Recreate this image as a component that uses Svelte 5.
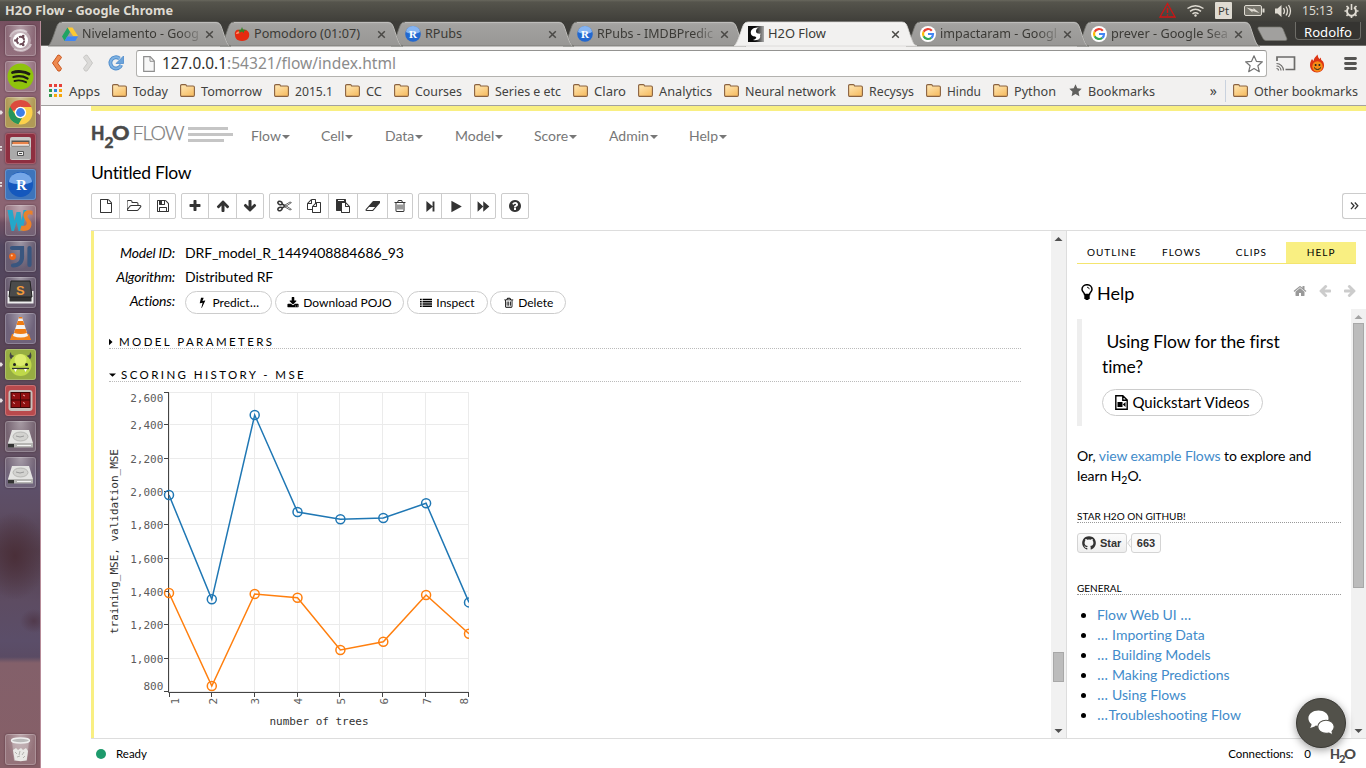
<script>
  const tabs = [
    { icon: 'drive', text: 'Nivelamento - Goog', w: 117, fade: true },
    { icon: 'tomato', text: 'Pomodoro (01:07)', w: 106 },
    { icon: 'rstudio', text: 'RPubs', w: 37 },
    { icon: 'rstudio', text: 'RPubs - IMDBPredic', w: 116, fade: true },
    { icon: 'h2o', text: 'H2O Flow', w: 58, active: true },
    { icon: 'google', text: 'impactaram - Googl', w: 117, fade: true },
    { icon: 'google', text: 'prever - Google Sea', w: 117, fade: true }
  ];
  const bookmarks = [
    ['Today', 35], ['Tomorrow', 61], ['2015.1', 38], ['CC', 16], ['Courses', 47],
    ['Series e etc', 66], ['Claro', 32], ['Analytics', 53], ['Neural network', 91],
    ['Recysys', 45], ['Hindu', 34], ['Python', 42]
  ];
  const menus = [['Flow', 70], ['Cell', 64], ['Data', 70], ['Model', 79], ['Score', 75], ['Admin', 80], ['Help', 70]];
  const groups = [
    [['file', 27], ['open', 30], ['save', 26]],
    [['plus', 26], ['up', 28], ['down', 27]],
    [['cut', 29], ['copy', 29], ['paste', 29], ['eraser', 30], ['trash', 25]],
    [['step', 22], ['play', 29], ['ff', 25]],
    [['question', 26]]
  ];
  const arrow = 'M1675 971q0 51-37 90l-75 75q-38 38-91 38-54 0-90-38l-294-293v704q0 52-37.5 84.5t-90.5 32.5h-128q-53 0-90.5-32.5t-37.5-84.5v-704l-294 293q-36 38-90 38t-90-38l-75-75q-38-38-38-90 0-53 38-91l651-651q35-37 90-37 54 0 91 37l651 651q37 39 37 91z';
  const paths = {
    file: 'M1596 380q28 28 48 76t20 88v1152q0 40-28 68t-68 28h-1344q-40 0-68-28t-28-68v-1600q0-40 28-68t68-28h896q40 0 88 20t76 48zm-444-244v376h376q-10-29-22-41l-313-313q-12-12-41-22zm384 1528v-1024h-416q-40 0-68-28t-28-68v-416h-768v1536h1280z',
    open: 'M1717 931q0-35-53-35h-1088q-40 0-85.500 21.500t-71.500 52.500l-294 363q-18 24-18 40 0 35 53 35h1088q40 0 86-22t71-53l294-363q18-22 18-39zm-1141-163h768v-160q0-40-28-68t-68-28h-576q-40 0-68-28t-28-68v-64q0-40-28-68t-68-28h-320q-40 0-68 28t-28 68v853l256-315q44-53 116-87.500t140-34.500zm1269 163q0 62-46 120l-295 363q-43 53-116 87.500t-140 34.500h-1088q-92 0-158-66t-66-158v-960q0-92 66-158t158-66h320q92 0 158 66t66 158v32h544q92 0 158 66t66 158v160h192q54 0 99 24.500t67 70.500q15 32 15 68z',
    save: 'M512 1536h768v-384h-768v384zm896 0h128v-896q0-14-10-38.500t-20-34.500l-281-281q-10-10-34-20t-39-10v416q0 40-28 68t-68 28h-576q-40 0-68-28t-28-68v-416h-128v1280h128v-416q0-40 28-68t68-28h832q40 0 68 28t28 68v416zm-384-928v-320q0-13-9.500-22.500t-22.500-9.500h-192q-13 0-22.500 9.500t-9.500 22.500v320q0 13 9.500 22.500t22.500 9.500h192q13 0 22.500-9.500t9.500-22.500zm640 32v928q0 40-28 68t-68 28h-1344q-40 0-68-28t-28-68v-1344q0-40 28-68t68-28h928q40 0 88 20t76 48l280 280q28 28 48 76t20 88z',
    plus: 'M1600 736v192q0 40-28 68t-68 28h-416v416q0 40-28 68t-68 28h-192q-40 0-68-28t-28-68v-416h-416q-40 0-68-28t-28-68v-192q0-40 28-68t68-28h416v-416q0-40 28-68t68-28h192q40 0 68 28t28 68v416h416q40 0 68 28t28 68z',
    up: arrow,
    copy: 'M1696 384q40 0 68 28t28 68v1216q0 40-28 68t-68 28h-960q-40 0-68-28t-28-68v-288h-544q-40 0-68-28t-28-68v-672q0-40 20-88t48-76l408-408q28-28 76-48t88-20h416q40 0 68 28t28 68v328q68-40 128-40h416zm-544 213l-299 299h299v-299zm-640-384l-299 299h299v-299zm196 647l316-316v-416h-384v416q0 40-28 68t-68 28h-416v640h512v-256q0-40 20-88t48-76zm956 804v-1152h-384v416q0 40-28 68t-68 28h-416v640h896z',
    paste: 'M768 1664h896v-640h-416q-40 0-68-28t-28-68v-416h-384v1152zm256-1440v-64q0-13-9.500-22.500t-22.500-9.500h-704q-13 0-22.500 9.500t-9.500 22.500v64q0 13 9.500 22.500t22.500 9.500h704q13 0 22.500-9.500t9.500-22.500zm256 672h299l-299-299v299zm512 128v672q0 40-28 68t-68 28h-960q-40 0-68-28t-28-68v-160h-544q-40 0-68-28t-28-68v-1344q0-40 28-68t68-28h1088q40 0 68 28t28 68v328q21 13 36 28l408 408q28 28 48 76t20 88z',
    eraser: 'M960 1408l336-384h-768l-336 384h768zm1013-1077q15 34 9.500 71.500t-30.500 65.500l-896 1024q-38 44-96 44h-768q-38 0-69.500-20.500t-47.500-54.500q-15-34-9.500-71.500t30.500-65.500l896-1024q38-44 96-44h768q38 0 69.500 20.500t47.500 54.500z',
    trash: 'M704 736v576q0 14-9 23t-23 9h-64q-14 0-23-9t-9-23v-576q0-14 9-23t23-9h64q14 0 23 9t9 23zm256 0v576q0 14-9 23t-23 9h-64q-14 0-23-9t-9-23v-576q0-14 9-23t23-9h64q14 0 23 9t9 23zm256 0v576q0 14-9 23t-23 9h-64q-14 0-23-9t-9-23v-576q0-14 9-23t23-9h64q14 0 23 9t9 23zm128 724v-948h-896v948q0 22 7 40.500t14.500 27 10.500 8.500h832q3 0 10.500-8.500t14.500-27 7-40.500zm-672-1076h448l-48-117q-7-9-17-11h-317q-10 2-17 11zm928 32v64q0 14-9 23t-23 9h-96v948q0 83-47 143.500t-113 60.500h-832q-66 0-113-58.500t-47-141.500v-952h-96q-14 0-23-9t-9-23v-64q0-14 9-23t23-9h309l70-167q15-37 54-63t79-26h320q40 0 79 26t54 63l70 167h309q14 0 23 9t9 23z',
    step: 'M330 150L1180 860V190h260v1412h-260V932L330 1642z',
    play: 'M1576 927l-1328 738q-23 13-39.500 3t-16.500-36v-1472q0-26 16.500-36t39.500 3l1328 738q23 13 23 31t-23 31z',
    ff: 'M80 180L860 880V180L1700 896 860 1612V912L80 1612z',
    question: 'M1024 1376v-192q0-14-9-23t-23-9h-192q-14 0-23 9t-9 23v192q0 14 9 23t23 9h192q14 0 23-9t9-23zm256-672q0-88-55.500-163t-138.500-116-170-41q-243 0-371 213-15 24 8 42l132 100q7 6 19 6 16 0 25-12 53-68 86-92 34-24 86-24 48 0 85.500 26t37.500 59q0 38-20 61t-68 45q-63 28-115.500 86.500t-52.500 125.500v36q0 14 9 23t23 9h192q14 0 23-9t9-23q0-19 21.500-49.500t54.500-49.500q32-18 49-28.500t46-35 44.500-48 28-60.500 12.500-81zm384 192q0 209-103 385.500t-279.500 279.500-385.500 103-385.500-103-279.500-279.500-103-385.500 103-385.500 279.500-279.500 385.500-103 385.500 103 279.500 279.500 103 385.500z',
    bolt: 'M1333 566q18 20 7 44l-540 1157q-13 25-42 25-4 0-14-2-17-5-25.500-19t-4.500-30l197-808-406 101q-4 1-12 1-18 0-31-11-18-15-13-39l201-825q4-14 16-23t28-9h328q19 0 32 12.500t13 29.500q0 8-5 18l-171 463 396-98q8-2 12-2 19 0 34 15z',
    download: 'M1344 1344q0-26-19-45t-45-19-45 19-19 45 19 45 45 19 45-19 19-45zm256 0q0-26-19-45t-45-19-45 19-19 45 19 45 45 19 45-19 19-45zm128-224v320q0 40-28 68t-68 28h-1472q-40 0-68-28t-28-68v-320q0-40 28-68t68-28h465l135 136q58 56 136 56t136-56l136-136h464q40 0 68 28t28 68zm-325-569q17 41-14 70l-448 448q-18 19-45 19t-45-19l-448-448q-31-29-14-70 17-39 59-39h256v-448q0-26 19-45t45-19h256q26 0 45 19t19 45v448h256q42 0 59 39z',
    list: 'M0 1280h256v220H0zM0 940h256v220H0zM0 600h256v220H0zM0 260h256v220H0zM384 1280h1408v220H384zM384 940h1408v220H384zM384 600h1408v220H384zM384 260h1408v220H384z',
    home: 'M1472 992v480q0 26-19 45t-45 19h-384v-384h-256v384h-384q-26 0-45-19t-19-45v-480q0-1 .5-3t.5-3l575-474 575 474q1 2 1 6zm223-69l-62 74q-8 9-21 11h-3q-13 0-21-7l-692-577-692 577q-12 8-24 7-13-2-21-11l-62-74q-8-10-7-23.500t11-21.500l719-599q32-26 76-26t76 26l244 204v-195q0-14 9-23t23-9h192q14 0 23 9t9 23v408l219 182q10 8 11 21.500t-7 23.500z',
    github: 'M896 128q209 0 385.500 103t279.500 279.500 103 385.500q0 251-146.500 451.500t-378.500 277.500q-27 5-40-7t-13-30q0-3 .5-76.500t.5-134.500q0-97-52-142 57-6 102.500-18t94-39 81-66.500 53-105 20.500-150.500q0-119-79-206 37-91-8-204-28-9-81 11t-92 44l-38 24q-93-26-192-26t-192 26q-16-11-42.500-27t-83.500-38.500-85-13.500q-45 113-8 204-79 87-79 206 0 85 20.500 150t52.500 105 80.500 67 94 39 102.500 18q-39 36-49 103-21 10-45 15t-57 5-65.500-21.500-55.500-62.500q-19-32-48.500-52t-49.500-24l-20-3q-21 0-29 4.500t-5 11.500 9 14 13 12l7 5q22 10 43.500 38t31.500 51l10 23q13 38 44 61.500t67 30 69.500 7 55.500-3.500l23-4q0 38 .5 88.500t.5 54.500q0 18-13 30t-40 7q-232-77-378.500-277.500t-146.500-451.500q0-209 103-385.500t279.500-279.500 385.500-103z'
  };
  const launcher = [
    ['dash', 'plain'], ['spotify', 'plain'], ['chrome', 'gold', 1], ['files', 'maroon', 2],
    ['rstudio', 'blue', 2], ['ws', 'plain'], ['ij', 'plain'], ['sublime', 'plain'],
    ['vlc', 'dark'], ['genymotion', 'lime', 1], ['terminator', 'red', 1], ['disk', 'plain'], ['disk', 'plain']
  ];
  const xs = [169, 211.8, 254.7, 297.5, 340.4, 383.3, 426.1, 469];
  const blue = [495, 599.3, 415, 512, 519.2, 518, 503.3, 602.4];
  const orange = [593, 686, 594, 597.7, 650, 641.7, 595, 633.7];
  const yTicks = [
    ['2,600', 392.5, 398], ['2,400', 424.5, 425], ['2,200', 458.5, 459], ['2,000', 491.5, 492],
    ['1,800', 524.5, 525], ['1,600', 558.5, 559], ['1,400', 591.5, 592], ['1,200', 624.5, 625],
    ['1,000', 658.5, 659], ['800', 691.5, 686]
  ];
  const xTicks = [169.5, 211.5, 254.5, 297.5, 339.5, 382.5, 425.5, 468.5];
  const xLabels = [175, 212.5, 255, 298, 340.5, 383.5, 426.5, 463.5];
  const helpLinks = [['Flow Web UI ', '…', ''], ['', '…', ' Importing Data'], ['', '…', ' Building Models'], ['', '…', ' Making Predictions'], ['', '…', ' Using Flows'], ['', '…', 'Troubleshooting Flow']];
  const line = (ys) => xs.map((x, i) => `${x},${ys[i]}`).join(' ');
</script>

{#snippet fit(text, w, size, fill, h, base, weight = 400)}
  <svg class="fit" width={w} height={h}><text x="0" y={base} font-size={size} font-weight={weight} {fill} textLength={w} lengthAdjust="spacingAndGlyphs">{text}</text></svg>
{/snippet}

{#snippet ic(name, size)}
  {#if name === 'cut'}
    <svg width="15" height="14" viewBox="0 0 15 14" fill="none" stroke="#333"><ellipse cx="3" cy="4" rx="2.200" ry="1.600" stroke-width="1.500" transform="rotate(25 3 4)" /><ellipse cx="3" cy="10" rx="2.200" ry="1.600" stroke-width="1.500" transform="rotate(-25 3 10)" /><path d="M5 5l3 1.700M5 9l3-1.700" stroke-width="1.600" /><path d="M7.500 6.300L13 3l1.400.6-6.200 4.200M7.500 7.700L13 11l1.400-.6-6.200-4.200" stroke-width=".9" stroke="#555" /></svg>
  {:else if name === 'down'}
    <svg width={size} height={size} viewBox="0 0 1792 1792"><path d={arrow} transform="rotate(180 896 896)" /></svg>
  {:else if name === 'left' || name === 'right'}
    <svg width={size} height={size} viewBox="0 0 1792 1792"><path d={arrow} transform="rotate({name === 'left' ? -90 : 90} 896 896)" /></svg>
  {:else}
    <svg width={name === 'open' || name === 'eraser' ? size * 1.14 : size} height={size} viewBox={name === 'open' || name === 'eraser' ? '0 0 2048 1792' : '0 0 1792 1792'}><path d={paths[name]} /></svg>
  {/if}
{/snippet}

{#snippet fav(name)}
  <svg class="fav" width="16" height="16" viewBox="0 0 16 16">
    {#if name === 'drive'}
      <path d="M5.500 1.500h5L16 10h-5z" fill="#fcc934" /><path d="M5.500 1.500L0 10.500 2.600 15 8 6z" fill="#1fa463" /><path d="M5.200 10.500H16L13.300 15H2.600z" fill="#4086f4" />
    {:else if name === 'tomato'}
      <path d="M1 9c-1-4 2-6 5-5 2-1 8-1 9 3s-1 8-7 8-7-4-7-6z" fill="#e52a10" /><path d="M2 8c0-2 2-3 4-2-1 2-3 2-4 2z" fill="#ff8a67" /><path d="M4 4l3-.5L8 1l1 2.500 4 .5-3 1 0 2-2-1.500L5 7l.5-2z" fill="#35832a" />
    {:else if name === 'rstudio'}
      <circle cx="8" cy="8" r="7.800" fill="#2268d0" /><path d="M1 6a7 6 0 0 1 14 0c-3 2-11 2-14 0z" fill="#86b5f2" /><text x="4" y="12" font-family="Liberation Serif" font-weight="700" font-size="11" fill="#fff">R</text>
    {:else if name === 'h2o'}
      <defs><linearGradient id="hg"><stop offset=".45" stop-color="#0a0a0a" /><stop offset="1" stop-color="#aaa" /></linearGradient></defs>
      <rect width="16" height="16" fill="url(#hg)" /><path d="M11 1.500C5 1 2 4 3 8c1 3 4 2 5 3 1 1-1 2.500-3 3 6 1 8-2 7-5l1-1.500C11 8 8 7.500 8 5.500 8 3.500 9 2 11 1.500z" fill="#fff" />
    {:else}
      <circle cx="8" cy="8" r="8" fill="#fff" /><g fill="none" stroke-width="2.200"><path d="M11.800 4.700A5 5 0 0 0 3.600 5.700" stroke="#ea4335" /><path d="M3.600 5.700a5 5 0 0 0 0 4.600" stroke="#fbbc05" /><path d="M3.600 10.300a5 5 0 0 0 7.700 1.500" stroke="#34a853" /><path d="M11.300 11.800A5 5 0 0 0 13 8H8" stroke="#4285f4" /></g>
    {/if}
  </svg>
{/snippet}

{#snippet app(name)}
  <svg width="31" height="31" viewBox="0 0 31 31">
    {#if name === 'dash'}
      <circle cx="15.500" cy="15.500" r="10.500" fill="#fff" opacity=".35" /><path d="M5 12C7 5 16 3 22 7M26 19c-2 6-10 9-17 5" stroke="#fff" stroke-width="2" fill="none" opacity=".5" /><circle cx="15.500" cy="15.500" r="7.500" fill="#fff" /><circle cx="15.500" cy="15.500" r="3.700" fill="none" stroke="#6d4b57" stroke-width="1.900" stroke-dasharray="6.700 1" /><g fill="#6d4b57"><circle cx="10.300" cy="15.500" r="1.300" /><circle cx="18.200" cy="11" r="1.300" /><circle cx="18.200" cy="20" r="1.300" /></g>
    {:else if name === 'spotify'}
      <circle cx="15.500" cy="15.500" r="13" fill="#8fc30c" /><g fill="none" stroke="#1d1d14" stroke-linecap="round"><path d="M7.500 11.500c5-1.700 12-1.200 16.500 1.500" stroke-width="2.800" /><path d="M8.500 16c5-1.400 10-.8 14 1.500" stroke-width="2.300" /><path d="M9.500 20c4-1.200 8-.6 11.500 1.200" stroke-width="1.900" /></g>
    {:else if name === 'chrome'}
      <circle cx="15.500" cy="15.500" r="12" fill="#fcd14b" /><path d="M5 9.500a12 12 0 0 1 21.500.5h-11a5.500 5.500 0 0 0-5 3.500l-5 .5z" fill="#dc4b3e" /><path d="M5 9.500l5.500 8.500a5.500 5.500 0 0 0 6.500 3L13.500 27.300A12 12 0 0 1 5 9.500z" fill="#27955a" /><circle cx="15.500" cy="15.500" r="5.700" fill="#fff" /><circle cx="15.500" cy="15.500" r="4.400" fill="#3f7fe8" />
    {:else if name === 'files'}
      <rect x="5" y="4" width="21" height="23" rx="2" fill="#c9c9c7" /><rect x="6.500" y="7.500" width="18" height="6" fill="#5a5550" /><path d="M7.500 9h16v3h-16z" fill="#e8834a" /><path d="M7 11h17v2H7z" fill="#fff" opacity=".7" /><rect x="5" y="14" width="21" height="12" rx="1" fill="#aaa" /><rect x="12" y="18" width="7" height="5" rx="1" fill="#555" /><path d="M13 19h5v3h-5z" fill="#eee" /><path d="M14 20.500h3" stroke="#444" />
    {:else if name === 'rstudio'}
      <circle cx="15.500" cy="15.500" r="12.500" fill="#1558bd" /><path d="M4 13a11.500 9.500 0 0 1 23 0c-5 3-18 3-23 0z" fill="#75a7e8" /><text x="11" y="20.500" font-family="Liberation Serif" font-size="15" font-weight="700" fill="#fff">R</text>
    {:else if name === 'ws'}
      <path d="M2.500 5h5l2 11 2-9h4l1 9 2-11h3l-4 21h-4l-2-9-2.500 9H6.500z" fill="#24a7ca" /><path d="M27.500 6c-6-1.500-9.500.5-9 5 .5 4 4 5 3 8-.5 2-3 2-5 1.500l-1.500 5c7 1.500 11.500-1 11.500-6.500 0-4-4-5-4-8 0-2 3-2 5-1z" fill="#e9812a" />
    {:else if name === 'ij'}
      <g fill="none" stroke="#39567f" stroke-width="4.200" stroke-linecap="round"><path d="M7 7h10v9c0 5-3 8.500-9 8.500M24.500 7v17" /></g><circle cx="7.500" cy="15.500" r="3.400" fill="#ed6518" /><circle cx="6.800" cy="14.500" r="1" fill="#ffc59d" />
    {:else if name === 'sublime'}
      <path d="M3.500 14v11.500h24V14" fill="#333" stroke="#eee" stroke-width="2" /><path d="M6 4h19l2 16H4z" fill="#4b4b4b" stroke="#222" /><text x="11" y="18" font-family="Liberation Sans" font-weight="700" font-size="13" fill="#f29a3b">S</text>
    {:else if name === 'vlc'}
      <path d="M7 21h17l2 6H5z" fill="#f28419" /><path d="M14 4h3l6 19q-7 3-15 0z" fill="#f7f3ee" /><path d="M12.800 8h5.400l1.300 4h-8zM10.300 16h10.400l1.300 4q-6 2-13 0zM13.500 5.500l.5-1.500h3l.5 1.500z" fill="#ee7b13" />
    {:else if name === 'genymotion'}
      <path d="M5 9c-1-3 0-5 1-6 0 3 1 3.500 4 4l-3 4zM26 9c1-3 0-5-1-6 0 3-1 3.500-4 4l3 4z" fill="#444" /><circle cx="15.500" cy="16" r="11" fill="#bfd84a" /><circle cx="15.500" cy="11" r="6" fill="#e9f57c" opacity=".7" /><circle cx="9.500" cy="15.500" r="1.500" fill="#222" /><circle cx="21.500" cy="15.500" r="1.500" fill="#222" /><path d="M7 19.500h17" stroke="#333" stroke-width="1.300" /><path d="M9 20h3l-1.500 3zM19 20h3l-1.500 3z" fill="#fff" />
    {:else if name === 'terminator'}
      <rect x="3.500" y="5" width="24" height="21" rx="3" fill="#c7bfba" /><rect x="5.500" y="7" width="20" height="16" fill="#3d0505" /><path d="M6.500 8h8.500v6.500H6.500zM16 8h8.500v6.500H16zM6.500 15.500h8.500v6.500H6.500zM16 15.500h8.500v6.500H16z" fill="#8f1011" /><path d="M8 10l2 1M18 10l2 1M8 17.500l2 1M18 17.500l2 1" stroke="#eaa" />
    {:else if name === 'disk'}
      <path d="M7 9h17l4 13H3z" fill="#e4e4e2" /><path d="M3 22h25v4.500H3z" fill="#b5b5b2" /><path d="M3 23h6v3.500H3z" fill="#333" /><ellipse cx="15.500" cy="15.500" rx="7.500" ry="4.500" fill="#d2d2cf" stroke="#a7a7a5" stroke-width=".7" /><path d="M11 15q4 2 8 0" stroke="#999" fill="none" /><path d="M12 24.500h14" stroke="#f4f4f4" />
    {:else}
      <path d="M7 7h17l-2 20H9z" fill="#e8e8e8" opacity=".35" /><ellipse cx="15.500" cy="6.500" rx="9" ry="2.500" fill="#bbb" stroke="#eee" stroke-width="1.400" /><path d="M8 16l3-2 2 2 3-2 2 2 3-2 2 3-1.300 9c-3 1.500-9 1.500-12 0z" fill="#e9e9e6" /><path d="M10 18l2 2M15 17l-1 4M19 18l-2 3M12 23l3-1M20 22l-2 2" stroke="#b3b3ae" />
    {/if}
  </svg>
{/snippet}

{#snippet sarrow(dir, c)}
  <svg width="15" height="14" viewBox="0 0 15 14"><path d={dir === 'up' ? 'M3.500 10h8L7.500 6z' : 'M3.500 5h8l-4 4z'} fill={c} /></svg>
{/snippet}

<div class="screen">
  <div class="panel">
    {@render fit('H2O Flow - Google Chrome', 168, 12.5, '#dfdbd2', 20, 15, 700)}
    <svg class="tray" width="206" height="21" viewBox="1158 0 206 21">
      <path d="M1167.500 3.500l7.500 13.500h-15z" fill="none" stroke="#d01515" stroke-width="1.300" /><path d="M1167.500 8v5M1167.500 14.200v1.500" stroke="#d01515" stroke-width="1.500" />
      <g fill="none" stroke="#dfdbd2" stroke-width="1.500"><path d="M1187.500 8.500q8-5.500 16 0M1190 11.300q5.500-4 11 0M1192.500 13.800q3-2.300 6 0" /></g><circle cx="1195.500" cy="15.500" r="1.200" fill="#dfdbd2" />
      <rect x="1215" y="2" width="17" height="17" rx="1" fill="#dfdbd2" /><text x="1218" y="15" font-size="11" fill="#3c3b37" textLength="11" lengthAdjust="spacingAndGlyphs">Pt</text>
      <rect x="1244.500" y="5.500" width="17" height="10" rx="1.500" fill="#77756c" stroke="#dfdbd2" /><path d="M1262.500 8.500h2v4h-2" fill="#dfdbd2" /><path d="M1246.500 7.500l7 2 0-1.500 6 5-7-2 0 1.500z" fill="#dfdbd2" />
      <path d="M1275 8.500h2.500l4-3.500v12l-4-3.500h-2.500z" fill="#dfdbd2" /><g fill="none" stroke="#dfdbd2" stroke-width="1.300"><path d="M1283.500 8q2 3 0 6M1286 6.500q3 4.500 0 9M1288.500 5q4 6 0 12" /></g>
      <text x="1302" y="15" font-size="13" fill="#dfdbd2" textLength="31" lengthAdjust="spacingAndGlyphs">15:13</text>
      <g stroke="#dfdbd2" fill="none"><path d="M1349 7.400a4.500 4.500 0 1 0 5 0" stroke-width="2" /><path d="M1351.500 4v6" stroke-width="1.600" /><path d="M1344.500 11h2M1356.500 11h2M1346.500 15.800l1.400-1.400M1355.100 14.400l1.400 1.400M1346.500 6l1.400 1.400M1355.100 7.400l1.400-1.400M1351.500 16v2" stroke-width="1.700" /></g>
    </svg>
  </div>

  <div class="desktop">
    <aside class="launcher">
      {#each launcher as [name, tone, run]}
        <div class="slot">
          <span class="pip">{#if run}<svg width="4" height="9" viewBox="0 0 4 9" fill="#e6dfe0">{#if run === 1}<path d="M0 2.500h1.500L3 4.500 1.500 6.500H0z" />{:else}<path d="M0 2h2v1.700H0zM0 5h2v1.700H0z" />{/if}</svg>{/if}</span>
          <span class="tile {tone}">{@render app(name)}</span>
          {#if name === 'chrome'}<svg width="4" height="9" viewBox="0 0 4 9" fill="#e6dfe0"><path d="M4 2L1 4.500 4 7z" /></svg>{/if}
        </div>
      {/each}
      <div class="slot last"><span class="pip"></span><span class="tile plain">{@render app('trash')}</span></div>
    </aside>

    <div class="browser">
      <div class="tabstrip">
        {#each tabs as t, i}
          <div class="tab" style="z-index:{t.active ? 20 : 10 - i}">
            <svg class="shape" width="186" height="25" viewBox="0 0 186 25">
              <defs><linearGradient id="tg{i}" x2="0" y2="1"><stop offset="0" stop-color={t.active ? '#f8f7f6' : '#aaa9a7'} /><stop offset=".15" stop-color={t.active ? '#f2f1f0' : '#a2a19f'} /><stop offset="1" stop-color={t.active ? '#f2f1f0' : '#989795'} /></linearGradient></defs>
              <path d="M-1 25C3 23 7 5 9 3q1-2 4-2h154q3 0 4 2c2 2 6 20 9 21l2 1z" fill="url(#tg{i})" stroke={t.active ? '#d9d8d6' : '#74736f'} stroke-width=".8" />
              {#if !t.active}<path d="M13 1.500h154q3 0 4 2c2 2 6 20 9 21" fill="none" stroke="#c3c2c0" stroke-width=".9" />{/if}
            </svg>
            {@render fav(t.icon)}
            <span class="ttext" class:fade={t.fade}>{@render fit(t.text, t.w, 12.6, '#3b3a36', 23, 17)}</span>
            <svg class="close" width="9" height="9" viewBox="0 0 9 9"><path d="M1.200 1.200l6.600 6.600M7.800 1.200L1.200 7.800" stroke="#4a4946" stroke-width="1.500" /></svg>
          </div>
        {/each}
        <svg class="newtab" width="32" height="16" viewBox="0 0 32 16"><path d="M2 1h21q2 0 3 2l4 10q0 1.500-2 1.500H9q-2 0-3-2L1 3q-.5-2 1-2z" fill="#a1a09e" stroke="#76756f" stroke-width=".7" /></svg>
        <div class="user">{@render fit('Rodolfo', 48, 12.5, '#fff', 17, 12.5)}</div>
      </div>

      <div class="toolbar">
        <svg class="navicons" width="86" height="26" viewBox="47 50 86 26">
          <path d="M60 55.500l1.500 2-4 5.500 4 5.500-1.500 2.500-2 0-5.500-8 5.500-8z" fill="#ee8a50" stroke="#c9561f" />
          <path d="M85 55.500l-1.500 2 4 5.500-4 5.500 1.500 2.500 2 0 5.500-8-5.500-8z" fill="#dbdad8" stroke="#c9c8c6" />
          <path d="M119.500 58.500a5.600 5.600 0 1 0 1.700 6.500" fill="none" stroke="#4e8ccb" stroke-width="3.800" /><path d="M119.500 58.500a5.600 5.600 0 1 0 1.700 6.500" fill="none" stroke="#7fb2e2" stroke-width="2" /><path d="M123.500 56v7.500h-7.500z" fill="#6ba3da" stroke="#4e8ccb" stroke-width=".8" />
        </svg>
        <div class="url">
          <svg width="12" height="16" viewBox="0 0 12 16"><path d="M.7.7h6.500L11.300 5v10.300H.7z" fill="#f7f7f7" stroke="#8f8f8f" stroke-width="1.200" /><path d="M7 1v4.300h4" fill="none" stroke="#8f8f8f" /></svg>
          <span class="host">{@render fit('127.0.0.1', 65, 16, '#30302e', 24, 17)}</span>{@render fit(':54321/flow/index.html', 169, 16, '#8c8c8c', 24, 17)}
          <svg class="star" width="20" height="20" viewBox="0 0 20 20"><path d="M10 1.800l2.400 5.500 6 .5-4.500 4 1.400 5.900L10 14.600l-5.300 3.100 1.400-5.900-4.500-4 6-.5z" fill="#fff" stroke="#737373" stroke-width="1.200" stroke-linejoin="round" /></svg>
        </div>
        <svg class="ext" width="90" height="26" viewBox="1272 50 90 26">
          <path d="M1277 61v-4h17.500v12.500h-9" fill="none" stroke="#6c6b69" stroke-width="1.700" /><g fill="none" stroke="#6c6b69" stroke-width="1.200"><path d="M1276.500 63.500a7 7 0 0 1 7 7M1276.500 66a4.500 4.500 0 0 1 4.500 4.500M1276.500 68.500a2 2 0 0 1 2 2" /></g>
          <path d="M1310 65c0-3 1-4 2-6l1.500 2c.5-3 2-4 4-6.500.5 2 .5 3 2 4.500l1.500-1.500c0 2 0 2.500 1.500 3.500 1 1 1.500 2.500 1.500 4.500 0 4-3 7-7 7s-7-3-7-7.500z" fill="#dd3413" /><circle cx="1317.500" cy="66.500" r="5.200" fill="#f68b16" /><circle cx="1315.600" cy="65" r="1" fill="#222" /><circle cx="1319.400" cy="65" r="1" fill="#222" /><path d="M1314 67.500q3.500 4 7 0" stroke="#222" fill="none" />
          <path d="M1345.500 58.500h10M1345.500 63.500h10M1345.500 68.500h10" stroke="#555452" stroke-width="2.800" stroke-linecap="round" />
        </svg>
      </div>

      <div class="bookmarks">
        <svg class="apps" width="13" height="13" viewBox="0 0 13 13"><path d="M0 0h3v3H0zM5 0h3v3H5zM10 0h3v3h-3z" fill="#e6413a" /><path d="M0 5h3v3H0z" fill="#31994e" /><path d="M5 5h3v3H5z" fill="#2a86e0" /><path d="M10 5h3v3h-3z" fill="#f5a70c" /><path d="M0 10h3v3H0z" fill="#31994e" /><path d="M5 10h3v3H5zM10 10h3v3h-3z" fill="#f5a70c" /></svg>
        {@render fit('Apps', 31, 12.6, '#424240', 20, 14.5)}
        {#each [...bookmarks, ['Bookmarks', 67], ['Other bookmarks', 104]] as [t, w]}
          {#if t === 'Other bookmarks'}<span class="more">»</span><i class="sep"></i>{/if}
          <span class="bm" class:starred={t === 'Bookmarks'} class:other={t === 'Other bookmarks'}>
            {#if t === 'Bookmarks'}
              <svg width="13" height="13" viewBox="0 0 13 13"><path d="M6.500.3l1.800 4 4.400.5-3.200 3 .9 4.400-3.900-2.200-3.900 2.200.9-4.400-3.200-3 4.400-.5z" fill="#60605e" /></svg>
            {:else}
              <svg width="15" height="13" viewBox="0 0 15 13"><defs><linearGradient id="fo" x2=".6" y2="1"><stop offset="0" stop-color="#ffe9b8" /><stop offset="1" stop-color="#f7c069" /></linearGradient></defs><path d="M.6 11V1.800q0-1.200 1.200-1.200h3.500q1 0 1.300 1.400h6.500q1.300 0 1.300 1.200V11q0 1.400-1.300 1.400H1.800Q.6 12.400.6 11z" fill="url(#fo)" stroke="#8a6240" stroke-width="1.100" /></svg>
            {/if}
            {@render fit(t, w, 12.6, '#424240', 20, 14.5)}
          </span>
        {/each}
      </div>

      <div class="page">
        <div class="stripe"></div>
        <header>
          <svg class="logo" width="145" height="28" viewBox="0 0 145 28">
            <g font-family="Lato" fill="#4a4a4a" stroke="#4a4a4a" stroke-width=".4" font-weight="900"><text x="0" y="17.500" font-size="19.500" textLength="13.500" lengthAdjust="spacingAndGlyphs">H</text><text x="13.500" y="25.500" font-size="15" textLength="9" lengthAdjust="spacingAndGlyphs">2</text><text x="21" y="17.500" font-size="19.500" textLength="17.500" lengthAdjust="spacingAndGlyphs">O</text></g>
            <text x="41.500" y="17.500" font-family="Lato" font-weight="300" font-size="19.500" fill="#7d7d7d" stroke="#7d7d7d" stroke-width=".25" textLength="52">FLOW</text>
            <path d="M97 6.500h40M97 12.500h45M97 18.500h36" stroke="#c5c5c5" stroke-width="3" />
          </svg>
          <nav>{#each menus as [m, w]}<span style="width:{w}px">{m}<i class="caret"></i></span>{/each}</nav>
        </header>
        <h1>Untitled Flow</h1>
        <div class="actions">
          {#each groups as g}
            <div class="group">{#each g as [name, w]}<span class="btn" style="width:{w}px">{@render ic(name, name === 'play' || name === 'step' || name === 'ff' ? 13 : 14)}</span>{/each}</div>
          {/each}
          <span class="collapse"><svg width="10" height="10" viewBox="0 0 10 10"><path d="M1 1.500l3 3.300L1 8.100M4.800 1.500l3 3.300-3 3.300" fill="none" stroke="#333" stroke-width="1.300" /></svg></span>
        </div>

        <div class="work">
          <main>
            <dl>
              <dt>Model ID:</dt><dd>DRF_model_R_1449408884686_93</dd>
              <dt>Algorithm:</dt><dd>Distributed RF</dd>
              <dt>Actions:</dt>
              <dd class="pills">
                <span class="pill" style="width:87px">{@render ic('bolt', 11)}<span>Predict<span class="dots">…</span></span></span>
                <span class="pill" style="width:129px">{@render ic('download', 12)}Download POJO</span>
                <span class="pill" style="width:81px">{@render ic('list', 12)}Inspect</span>
                <span class="pill" style="width:76px;margin-left:-1px">{@render ic('trash', 11.5)}Delete</span>
              </dd>
            </dl>
            <h2><svg width="10" height="8" viewBox="0 0 10 8"><path d="M0 .8v6.400l3.500-3.200z" /></svg>MODEL PARAMETERS</h2>
            <h2 class="two"><svg width="12" height="8" viewBox="0 0 12 8"><path d="M0 2.500h7L3.500 5.800z" /></svg>SCORING HISTORY - MSE</h2>
            <svg class="chart" width="380" height="352" viewBox="103 384 380 352">
              <defs><clipPath id="plot"><rect x="160" y="390" width="309" height="306" /></clipPath></defs>
              <g stroke="#ebebeb">{#each yTicks as [, y]}<path d="M170 {y}H469" />{/each}{#each xTicks as x}<path d="M{x} 392V692" />{/each}</g>
              <path d="M168.500 392V692.500H469" fill="none" stroke="#444" />
              {#each yTicks as [label, y, ly]}
                <path d="M164 {y}h5" stroke="#444" /><text x="163.300" y={ly + 4} text-anchor="end" font-size="11" fill="#5c5c5c">{label}</text>
              {/each}
              {#each xTicks as x, i}
                <path d="M{x} 692v5" stroke="#444" /><text transform="translate({xLabels[i] + 4} 704.500) rotate(-90)" font-size="11" fill="#5c5c5c">{i + 1}</text>
              {/each}
              <g clip-path="url(#plot)" fill="none" stroke-width="1.500">
                <polyline points={line(blue)} stroke="#1f77b4" /><polyline points={line(orange)} stroke="#ff7f0e" />
                {#each xs as x, i}<circle cx={x} cy={blue[i]} r="4.500" stroke="#1f77b4" /><circle cx={x} cy={orange[i]} r="4.500" stroke="#ff7f0e" />{/each}
              </g>
              <text class="axis" x="269.500" y="725" textLength="99">number of trees</text>
              <text class="axis" transform="translate(117.500 634) rotate(-90)" textLength="185">training_MSE, validation_MSE</text>
            </svg>
          </main>
          <div class="scroll">{@render sarrow('up', '#505050')}<i style="height:30px;margin-top:407px"></i><b>{@render sarrow('down', '#505050')}</b></div>
          <aside class="side">
            <div class="stabs"><span>OUTLINE</span><span>FLOWS</span><span>CLIPS</span><span class="on">HELP</span></div>
            <div class="hhead">
              <svg width="12" height="17" viewBox="0 0 12 17"><path d="M3.500 10.500C3.500 8.500 1 8 1 5.300a5 4.600 0 0 1 10 0c0 2.700-2.500 3.200-2.500 5.200z" fill="none" stroke="#000" stroke-width="1.500" /><path d="M3.300 10.500h5.400v3.700L7 16H5l-1.700-1.800z" /><path d="M6 3.200q2 0 2.300 2" fill="none" stroke="#000" stroke-width=".9" /></svg>
              <span>Help</span>
              <div class="hnav">{@render ic('home', 14)}{@render ic('left', 14)}{@render ic('right', 14)}</div>
            </div>
            <div class="hwrap">
              <div class="hbody">
                <blockquote>
                  <p>&nbsp;Using Flow for the first time?</p>
                  <span class="pill big"><svg width="13" height="15" viewBox="0 0 13 15"><path d="M.8.8h7L12.200 5v9.200H.8zM7.800 1v4.200H12" fill="none" stroke="#000" stroke-width="1.400" /><path d="M2.500 7h5v5h-5zM7.800 9.500L10.500 7v5z" /></svg>Quickstart Videos</span>
                </blockquote>
                <p class="or">Or, <a href="#flows">view example Flows</a> to explore and learn H<sub>2</sub>O.</p>
                <h3>STAR H2O ON GITHUB!</h3>
                <div class="gh"><span class="ghb">{@render ic('github', 16)}Star</span><svg width="4" height="10" viewBox="0 0 4 10"><path d="M4 .5L.7 5 4 9.500" fill="#fafafa" stroke="#d4d4d4" /></svg><span class="ghc">663</span></div>
                <h3>GENERAL</h3>
                <ul>{#each helpLinks as [a, dots, b]}<li><a href="#help">{a}<span class="dots">{dots}</span>{b}</a></li>{/each}</ul>
              </div>
              <div class="scroll inner">{@render sarrow('up', '#a3a3a3')}<i style="height:265px"></i><b>{@render sarrow('down', '#505050')}</b></div>
            </div>
          </aside>
        </div>
        <footer>
          <i class="dot"></i><span>Ready</span>
          <span class="conn">Connections:</span><span class="zero">0</span>
          <svg class="mini" width="26" height="18" viewBox="0 0 26 18" font-family="Lato" font-weight="900" fill="#4a4a4a"><text x="0" y="13.500" font-size="14" textLength="10" lengthAdjust="spacingAndGlyphs">H</text><text x="9" y="18" font-size="11" textLength="6.500" lengthAdjust="spacingAndGlyphs">2</text><text x="14" y="13.500" font-size="14" textLength="12" lengthAdjust="spacingAndGlyphs">O</text></svg>
        </footer>
      </div>
    </div>
  </div>
  <div class="chat">
    <svg width="27" height="27" viewBox="1307 709.500 27 27"><path d="M1317.500 711c5.600 0 10 3.300 10 7.700s-4.400 7.700-10 7.700c-1 0-1.900-.1-2.700-.3-1.700 1.500-3.900 2.200-5.800 2.100 1-1 1.500-2.300 1.500-3.700-1.900-1.400-3.100-3.500-3.100-5.800 0-4.400 4.500-7.700 10.100-7.700z" fill="#fff" /><path d="M1325 720.700c4.600 0 8.200 2.900 8.200 6.600 0 1.900-.8 3.500-2.200 4.700.1 1.200.6 2.200 1.700 3-1.900.1-3.700-.5-5-1.500-.9.300-1.800.4-2.700.4-4.600 0-8.200-2.900-8.200-6.600s3.600-6.600 8.200-6.600z" fill="#fff" stroke="#52514a" stroke-width="1.100" /></svg>
  </div>
</div>

<style>
  :global(body) { margin: 0; overflow: hidden; }
  .screen { width: 1366px; height: 768px; overflow: hidden; position: relative; display: flex; flex-direction: column; background: #fff; font-family: Lato, sans-serif; font-variant-ligatures: none; color: #000; }
  .screen * { box-sizing: border-box; }
  svg { display: block; flex: none; }
  .fit { font-family: "Noto Sans", sans-serif; overflow: visible; }
  .panel { height: 21px; flex: none; background: linear-gradient(#68675d, #55544c 10%, #403f3a); display: flex; padding-left: 5px; }
  .tray { margin-left: auto; margin-right: 2px; font-family: "Noto Sans", sans-serif; }
  .desktop { flex: 1; display: flex; min-height: 0; }
  .launcher { width: 41px; flex: none; display: flex; flex-direction: column; padding-top: 1px; border-right: 1px solid #b78b98; background:
    radial-gradient(ellipse 32px 44px at 15px 535px, #4a2f39, #4a2f3900),
    radial-gradient(ellipse 14px 12px at 34px 600px, #513a4c, #513a4c00),
    linear-gradient(#765060 0, #8d6473 60px, #8b6472 195px, #6e5063 202px, #51465f 225px, #5a4658 330px, #65505f 420px, #5d506b 460px, #5d4d63 490px, #54404f 530px, #5d4c62 580px, #5b4e69 620px, #5a4b64 636px, #83606a 642px, #865f67 747px); }
  .slot { height: 36px; display: flex; align-items: center; flex: none; padding-top: 1px; }
  .slot.last { margin-top: auto; margin-bottom: 1px; }
  .pip { width: 5px; flex: none; }
  .tile { width: 31px; height: 31px; border-radius: 3px; flex: none; box-shadow: inset 0 0 0 1px #ffffff38, 0 0 2px #2a121c90; background: radial-gradient(ellipse at 50% 0, #ffffff70, #ffffff20 65%); }
  .gold { background-color: #a58c3e; } .maroon { background-color: #8e2f40; background-image: none; } .blue { background-color: #3d74bb; background-image: none; }
  .dark { background-color: #5b4d68; } .lime { background-color: #97ad42; background-image: none; } .red { background-color: #b94a4d; background-image: none; }
  .browser { flex: 1; min-width: 0; display: flex; flex-direction: column; }
  .tabstrip { height: 25px; flex: none; background: linear-gradient(#3e3d39, #3a3936); display: flex; padding-left: 8px; position: relative; border-bottom: 1px solid #73726e; }
  .tab { width: 171.500px; height: 25px; flex: none; position: relative; display: flex; padding-left: 13px; }
  .shape { position: absolute; left: 0; top: 0; overflow: visible; }
  .fav { position: relative; margin-top: 5px; }
  .ttext { position: relative; margin-left: 4px; width: 118px; }
  .fade { -webkit-mask-image: linear-gradient(90deg, #000 82%, #0003); mask-image: linear-gradient(90deg, #000 82%, #0003); }
  .close { position: relative; margin: 9px 0 0 5px; }
  .newtab { margin: 5px 0 0 7px; }
  .user { margin-left: 6px; height: 18px; width: 66px; border: 1px solid #6e6d68; border-top: 0; border-radius: 0 0 4px 4px; padding: 2px 0 0 8px; margin-top: 1px; background: #353431; }
  .toolbar { height: 33px; flex: none; display: flex; background: #f2f1f0; padding: 4px 4px 0 6px; }
  .navicons { margin-right: 3px; }
  .url { width: 1131px; height: 27px; background: #fff; border: 1px solid #b3b2af; border-top-color: #949391; border-radius: 3px; display: flex; align-items: center; padding: 0 2px 0 6px; }
  .host { margin-left: 7px; }
  .star { margin-left: auto; }
  .ext { margin-left: 5px; }
  .bookmarks { height: 27px; flex: none; background: #f2f1f0; border-bottom: 1px solid #a3a2a0; display: flex; align-items: center; padding: 0 8px 3px 8px; }
  .apps { margin-right: 7px; }
  .bm { display: flex; align-items: center; gap: 6px; margin-left: 12px; }
  .starred { margin-left: 13px; }
  .other { margin-left: 7px; }
  .more { margin-left: auto; font: 14px/18px "Noto Sans", sans-serif; color: #424240; }
  .sep { width: 1px; height: 22px; background: #c9d2de; margin-left: 8px; }
  .page { flex: 1; min-height: 0; display: flex; flex-direction: column; padding-left: 50px; }
  .stripe { height: 5px; background: #f9ef82; flex: none; }
  header { height: 50px; flex: none; display: flex; align-items: flex-start; padding-top: 11px; }
  nav { display: flex; font-size: 14px; line-height: 20px; color: #777; padding: 4px 0 0 0; }
  nav span { padding-left: 15px; display: flex; align-items: center; flex: none; }
  .caret { border: 4px solid transparent; border-top-color: #777; border-bottom: 0; margin-left: 1px; margin-top: 1px; }
  h1 { margin: 0; font-size: 17.500px; font-weight: 400; line-height: 24px; height: 32px; flex: none; letter-spacing: -.3px; }
  .actions { display: flex; height: 38px; flex: none; gap: 5px; }
  .group { display: flex; height: 26px; border: 1px solid #ccc; border-radius: 2px; }
  .btn { display: flex; align-items: center; justify-content: center; fill: #333; border-left: 1px solid #ccc; }
  .btn:first-child { border-left: 0; }
  .collapse { margin-left: auto; width: 24px; height: 26px; border: 1px solid #ccc; border-right: 0; border-radius: 3px 0 0 3px; display: flex; align-items: center; padding-left: 7px; }
  .work { flex: 1; min-height: 0; display: flex; border-top: 1px solid #ddd; border-bottom: 1px solid #ddd; margin-top: -1px; }
  main { flex: 1; border-left: 3px solid #f9ef82; padding: 10px 30px 0 15px; overflow: hidden; font-size: 14px; }
  dl { margin: 0; display: grid; grid-template-columns: 66px 1fr; column-gap: 10px; line-height: 24px; grid-template-rows: 24px 24px 24px; letter-spacing: -.1px; }
  dt { font-style: italic; text-align: right; white-space: nowrap; letter-spacing: -.2px; }
  dd { margin: 0; }
  .pills { display: flex; gap: 3px; padding-top: 2px; letter-spacing: 0; }
  .pill { height: 23px; border: 1px solid #ccc; border-radius: 12px; font-size: 12px; display: flex; align-items: center; justify-content: center; gap: 4px; white-space: nowrap; }
  .dots { font-family: "Noto Sans", sans-serif; line-height: 1; letter-spacing: .4px; }
  h2 { margin: 22px 0 0; height: 15px; border-bottom: 1px dotted #bbb; font-size: 11.500px; font-weight: 400; letter-spacing: 2.400px; display: flex; align-items: center; line-height: 14px; padding-top: 1px; }
  h2:first-of-type { margin-top: 21px; }
  h2.two { margin-top: 18px; }
  .chart { margin: 2px 0 0 -6px; font-family: "DejaVu Sans Mono", monospace; }
  .axis { font-size: 11px; fill: #333; }
  .scroll { width: 15px; flex: none; background: #f1f1f1; display: flex; flex-direction: column; }
  .scroll i { background: #bcbcbc; border: 1px solid #a8a8a8; margin: 0 2px; display: block; flex: none; }
  .scroll b { margin-top: auto; }
  .side { width: 300px; flex: none; border-left: 1px solid #ddd; padding-top: 11px; display: flex; flex-direction: column; }
  .stabs { display: flex; margin: 0 10px; height: 22px; border-bottom: 1px solid #f4e56f; flex: none; }
  .stabs span { flex: 1; text-align: center; font-size: 10px; letter-spacing: 1.050px; line-height: 21px; }
  .stabs .on { background: #f9ef82; }
  .hhead { display: flex; height: 45px; flex: none; padding: 20px 9px 0 14px; font-size: 18px; line-height: 18px; }
  .hhead span { margin-left: 4px; }
  .hnav { margin-left: auto; display: flex; gap: 11px; fill: #ccc; }
  .hnav :global(svg:first-child) { fill: #999; }
  .hwrap { flex: 1; min-height: 0; display: flex; }
  .hbody { flex: 1; padding: 10px 10px 0; overflow: hidden; font-size: 14px; line-height: 20px; }
  blockquote { margin: 0; height: 107px; border-left: 5px solid #eee; padding: 10px 20px; font-size: 17.500px; line-height: 25px; letter-spacing: -.1px; }
  blockquote p { margin: 0 0 10px; }
  .big { height: 27px; width: 161px; font-size: 15px; border-radius: 14px; line-height: 20px; letter-spacing: 0; padding-bottom: 1px; }
  a { color: #428bca; text-decoration: none; }
  .or { margin: 20px 0 0; letter-spacing: -.07px; }
  sub { font-size: 75%; line-height: 0; position: relative; bottom: -.25em; vertical-align: baseline; }
  h3 { margin: 24px 0 0; height: 13px; line-height: 12px; font-size: 10px; font-weight: 400; border-bottom: 1px dotted #999; }
  .gh { display: flex; align-items: center; margin: 10px 0 0; height: 20px; font: 700 11px/18px "Liberation Sans", sans-serif; color: #333; }
  .ghb { width: 50px; height: 20px; border: 1px solid #d4d4d4; border-radius: 3px; background: linear-gradient(#fcfcfc, #eee); display: flex; align-items: center; padding-left: 3px; gap: 3px; fill: #333; }
  .ghc { width: 30px; height: 20px; border: 1px solid #d4d4d4; border-radius: 3px; background: #fafafa; text-align: center; }
  .gh + h3 { margin-top: 29px; }
  ul { margin: 10px 0 0; padding-left: 20px; }
  footer { height: 29px; flex: none; display: flex; align-items: center; font-size: 11.500px; padding: 0 10px 0 5px; }
  .dot { width: 10px; height: 10px; border-radius: 5px; background: #1d9a6c; margin-right: 10px; }
  .conn { margin-left: auto; letter-spacing: -.1px; }
  .zero { margin: 0 19px 0 11px; }
  .mini { overflow: visible; }
  .chat { position: absolute; left: 1296px; top: 697.500px; width: 50px; height: 50px; border-radius: 25px; background: #52514a; border: 1px solid #3b3a35; box-shadow: 0 2px 8px #0006; display: flex; align-items: center; justify-content: center; }
</style>
